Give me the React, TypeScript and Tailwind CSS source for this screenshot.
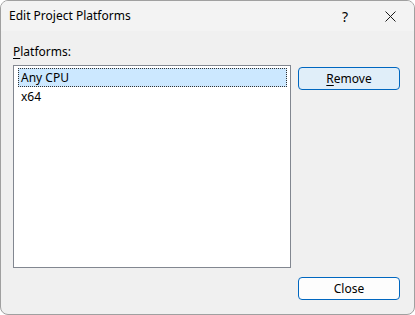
import React from 'react';

const font = { fontFamily: '"Segoe UI", "Noto Sans", sans-serif' };

const App: React.FC = () => {
  return (
    <div className="w-[415px] h-[315px] bg-white" style={font}>
      <div className="w-full h-full flex flex-col rounded-[8px] border border-[#a0a0a0] overflow-hidden bg-[#f0f0f0] text-[12px] text-black">
        {/* Title bar */}
        <div className="h-[30px] flex items-center bg-[#f3f3f3] shrink-0">
          <span className="pl-[8px] flex-1">Edit Project Platforms</span>
          <div className="w-[46px] h-full flex items-center justify-center text-[14px]">?</div>
          <div className="w-[46px] h-full flex items-center justify-center pr-[2px]">
            <svg width="11" height="11" viewBox="0 0 11 11">
              <path d="M0.5 0.5L10.5 10.5M10.5 0.5L0.5 10.5" stroke="#1a1a1a" strokeWidth="1" />
            </svg>
          </div>
        </div>

        {/* Body */}
        <div className="flex-1 flex flex-col pl-[12px] pr-[14px] pt-[13px]">
          <div className="h-[16px] leading-[16px] mb-[5px]">
            <span className="underline underline-offset-2">P</span>latforms:
          </div>
          <div className="flex gap-[7px]">
            <div className="w-[278px] h-[203px] bg-white border border-[#828790] pl-[4px] pr-[3px] pt-[2px]">
              <div className="h-[19px] flex items-center bg-[#cce8ff] border border-dotted border-[#333] pl-[2px]">
                Any CPU
              </div>
              <div className="h-[19px] flex items-center pl-[3px]">x64</div>
            </div>
            <div className="flex flex-col pt-[2px]">
              <button className="w-[102px] h-[23px] rounded-[4px] border border-[#0067c0] bg-[#e0eef9] flex items-center justify-center">
                <span>
                  <span className="underline underline-offset-2">R</span>emove
                </span>
              </button>
            </div>
          </div>
          <div className="flex justify-end mt-[9px]">
            <button className="w-[102px] h-[23px] rounded-[4px] border border-[#0067c0] bg-[#fdfdfd] flex items-center justify-center">
              Close
            </button>
          </div>
        </div>
      </div>
    </div>
  );
};

export default App;
